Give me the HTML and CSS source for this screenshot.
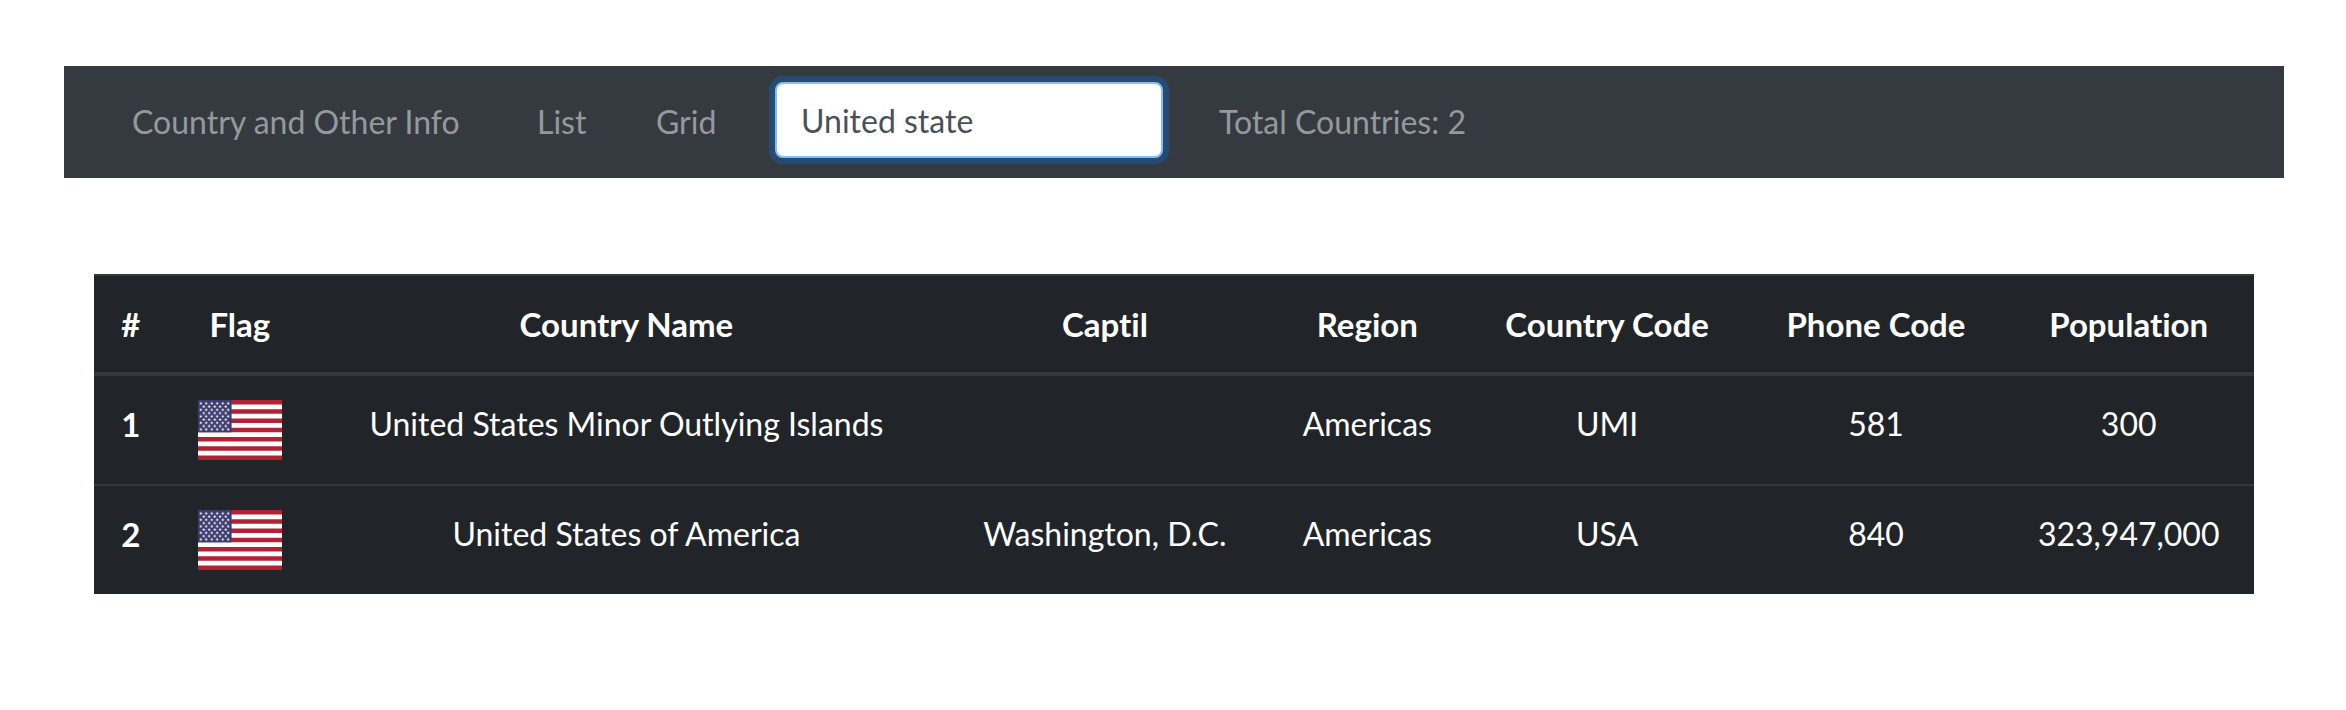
FILE: index.html
```
<!DOCTYPE html>
<html lang="en">
<head>
<meta charset="utf-8">
<title>Country and Other Info</title>
<link rel="stylesheet" href="styles.css">
</head>
<body>
<svg class="sprite" aria-hidden="true">
  <defs>
    <path id="star" fill="#fff" d="M0-1.7 .5-.5 1.7-.5 .7.3 1.1 1.6 0 .8-1.1 1.6-.7.3-1.7-.5-.5-.5z"/>
    <pattern id="stars" x="0" y="0" width="5.5" height="6.5" patternUnits="userSpaceOnUse">
      <use href="#star" x="2.75" y="3.2"/>
    </pattern>
    <symbol id="flag-us" viewBox="0 0 84 60" preserveAspectRatio="none">
      <rect width="84" height="60" fill="#fff"/>
      <path stroke="#b22234" stroke-width="4.615" d="M0 2.31h84M0 11.54h84M0 20.77h84M0 30h84M0 39.23h84M0 48.46h84M0 57.69h84"/>
      <rect width="33.6" height="32.3" fill="#3c3b6e"/>
      <rect x=".2" width="33" height="32.5" fill="url(#stars)"/>
      <svg x="2.95" y="3.25" width="27.5" height="26">
        <rect width="27.5" height="26" fill="url(#stars)"/>
      </svg>
    </symbol>
  </defs>
</svg>
<nav class="navbar">
  <a class="nav-link" href="#">Country and Other Info</a>
  <a class="nav-link" href="#list">List</a>
  <a class="nav-link" href="#grid">Grid</a>
  <input class="search" type="text" value="United state" aria-label="Search countries">
  <span class="nav-text">Total Countries: 2</span>
</nav>
<main class="content">
  <table class="countries">
    <colgroup>
      <col class="col-index"><col class="col-flag"><col class="col-name"><col class="col-capital">
      <col class="col-region"><col class="col-code"><col class="col-phone"><col class="col-population">
    </colgroup>
    <thead>
      <tr><th scope="col">#</th><th scope="col">Flag</th><th scope="col">Country Name</th><th scope="col">Captil</th><th scope="col">Region</th><th scope="col">Country Code</th><th scope="col">Phone Code</th><th scope="col">Population</th></tr>
    </thead>
    <tbody>
      <tr><th scope="row">1</th><td><svg class="flag" role="img" aria-label="Flag"><use href="#flag-us"/></svg></td><td>United States Minor Outlying Islands</td><td></td><td>Americas</td><td>UMI</td><td>581</td><td>300</td></tr>
      <tr><th scope="row">2</th><td><svg class="flag" role="img" aria-label="Flag"><use href="#flag-us"/></svg></td><td>United States of America</td><td>Washington, D.C.</td><td>Americas</td><td>USA</td><td>840</td><td>323,947,000</td></tr>
    </tbody>
  </table>
</main>
</body>
</html>
```
FILE: styles.css
```
* { box-sizing: border-box; }
body {
  margin: 0;
  padding: 66px 62px 0 64px;
  background: #fff;
  color: #fff;
  font-family: Lato, "Open Sans", sans-serif;
  font-size: 32px;
  font-variant-ligatures: none;
  line-height: 48px;
}
.sprite { position: absolute; width: 0; height: 0; }
.navbar {
  display: grid;
  grid-template-columns: 405px 119px 119px 388px auto;
  align-items: center;
  padding: 16px 68px;
  background: #353a41;
}
.nav-link, .nav-text {
  padding: 16px 0;
  color: #96999c;
  text-decoration: none;
  white-space: nowrap;
}
.nav-text { padding-left: 56px; }
.search {
  align-self: start;
  width: 100%;
  height: 76px;
  padding: 0 24px;
  border: 2px solid #80bdff;
  border-radius: 8px;
  outline: 0;
  box-shadow: 0 0 0 6px rgba(0, 123, 255, .25);
  background: #fff;
  color: #495057;
  font: inherit;
}
.content { padding: 96px 30px; }
.countries {
  width: 100%;
  table-layout: fixed;
  border-collapse: separate;
  border-spacing: 0;
  background: #212529;
  text-align: center;
}
th, td {
  padding: 24px 0;
  border-top: 2px solid #32383e;
  vertical-align: top;
  white-space: nowrap;
}
thead th { border-bottom: 4px solid #32383e; }
tbody tr:first-child > * { border-top: 0; }
th { font-size: 33px; font-weight: 700; }
td { font-weight: 400; }
.flag { display: block; width: 84px; height: 60px; margin: 0 auto; }
.col-index { width: 3.4%; }
.col-flag { width: 6.7%; }
.col-name { width: 29.1%; }
.col-capital { width: 15.2%; }
.col-region { width: 9.1%; }
.col-code { width: 13.1%; }
.col-phone { width: 11.8%; }
.col-population { width: 11.6%; }
```
